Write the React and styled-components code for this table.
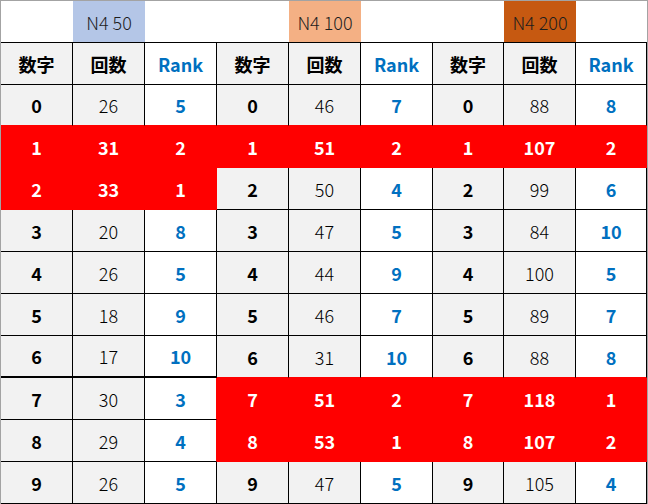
import styled, { createGlobalStyle } from 'styled-components';

const GlobalStyle = createGlobalStyle`
  html, body {
    margin: 0;
    padding: 0;
    background: #ffffff;
  }
  body {
    font-family: 'Noto Sans CJK JP', 'Noto Sans', sans-serif;
  }
`;

const RED = '#ff0000';
const LINE = '#000000';

const groups = [
  {
    title: 'N4 50',
    tint: '#b4c6e7',
    counts: [26, 31, 33, 20, 26, 18, 17, 30, 29, 26],
    ranks: [5, 2, 1, 8, 5, 9, 10, 3, 4, 5],
    hot: [1, 2],
  },
  {
    title: 'N4 100',
    tint: '#f4b084',
    counts: [46, 51, 50, 47, 44, 46, 31, 51, 53, 47],
    ranks: [7, 2, 4, 5, 9, 7, 10, 2, 1, 5],
    hot: [1, 7, 8],
  },
  {
    title: 'N4 200',
    tint: '#c65911',
    counts: [88, 107, 99, 84, 100, 89, 88, 118, 107, 105],
    ranks: [8, 2, 6, 10, 5, 7, 8, 1, 2, 4],
    hot: [1, 7, 8],
  },
];

const Sheet = styled.div`
  display: grid;
  grid-template-columns: 72px 72px 72px 72px 72px 72px 71px 72px 71px;
  grid-template-rows: 42px 42px 41px repeat(9, 42px);
  width: 646px;
  border: 1px solid #a3a3a3;
  border-bottom: none;
  background: #ffffff;
`;

const TitleCell = styled.div`
  display: flex;
  align-items: center;
  justify-content: center;
  background: ${(p) => p.$tint || '#ffffff'};
  border-bottom: 1px solid ${LINE};
  color: #1e1e1e;
  font-size: 18px;
  font-weight: 300;
`;

const Cell = styled.div`
  box-sizing: border-box;
  display: flex;
  align-items: center;
  justify-content: center;
  background: ${(p) => p.$bg};
  color: ${(p) => p.$color};
  font-size: 18px;
  font-weight: ${(p) => (p.$bold ? 700 : 300)};
  border-right: 1px solid ${(p) => p.$right};
  border-bottom: ${(p) => (p.$thick ? 2 : 1)}px solid ${(p) => p.$bottom};
`;

const isHot = (row, col) => {
  if (row < 0 || row > 9 || col > 8) return false;
  return groups[Math.floor(col / 3)].hot.includes(row);
};

const App = () => {
  const cells = [];

  groups.forEach((g, gi) => {
    cells.push(<TitleCell key={`t${gi}a`} />);
    cells.push(
      <TitleCell key={`t${gi}b`} $tint={g.tint}>
        {g.title}
      </TitleCell>
    );
    cells.push(<TitleCell key={`t${gi}c`} />);
  });

  groups.forEach((g, gi) => {
    ['数字', '回数', 'Rank'].forEach((label, k) => (
      cells.push(
        <Cell
          key={`h${gi}${k}`}
          $bg={k < 2 ? '#f2f2f2' : '#ffffff'}
          $color={k < 2 ? '#000000' : '#0070c0'}
          $bold
          $right={LINE}
          $bottom={LINE}
        >
          {label}
        </Cell>
      )
    ));
  });

  for (let row = 0; row < 10; row++) {
    for (let col = 0; col < 9; col++) {
      const g = groups[Math.floor(col / 3)];
      const k = col % 3;
      const hot = isHot(row, col);
      const value = k === 0 ? row : k === 1 ? g.counts[row] : g.ranks[row];
      const thick = row === 6 && col < 3;

      let bg = k < 2 ? '#f2f2f2' : '#ffffff';
      let color = k === 2 ? '#0070c0' : '#000000';
      if (hot) {
        bg = RED;
        color = '#ffffff';
      }

      cells.push(
        <Cell
          key={`c${row}-${col}`}
          $bg={bg}
          $color={color}
          $bold={hot || k !== 1}
          $right={hot || isHot(row, col + 1) ? RED : LINE}
          $bottom={hot || isHot(row + 1, col) ? RED : LINE}
          $thick={thick}
        >
          {value}
        </Cell>
      );
    }
  }

  return (
    <>
      <GlobalStyle />
      <Sheet>{cells}</Sheet>
    </>
  );
};

export default App;
